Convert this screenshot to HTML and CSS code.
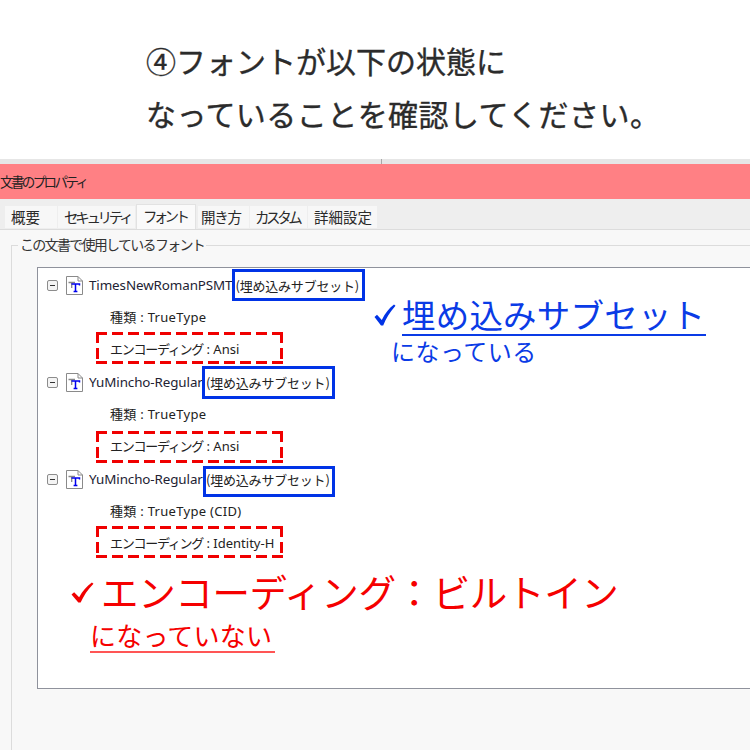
FILE: index.html
```html
<!DOCTYPE html>
<html lang="ja">
<head>
<meta charset="utf-8">
<title>文書のプロパティ</title>
<link rel="stylesheet" href="styles.css">
</head>
<body>
<svg class="defs" width="0" height="0" aria-hidden="true">
  <symbol id="ttf" viewBox="0 0 19 19">
    <path d="M1.5 .5H13L17.5 5V18.5H1.5Z" fill="#fff" stroke="#8a8a8a"/>
    <path d="M13 .5V5H17.5" fill="none" stroke="#8a8a8a"/>
    <path d="M3.5 6.5H10M6.7 6.5V12" fill="none" stroke="#888" stroke-width="1.3"/>
    <path d="M6.5 8H14.5V9.6M10.5 8V15.5M8.6 15.5H12.4" fill="none" stroke="#0000ee" stroke-width="1.5"/>
  </symbol>
  <symbol id="check" viewBox="0 0 22 22" preserveAspectRatio="none">
    <path d="M.5 13L3 10.8L7.8 16C11 9.5 15 4.2 20 .5L21.5 1.8C16 8 12 14.5 9.2 21.5H7Z" fill="currentColor"/>
  </symbol>
</svg>
<header class="heading">
  <p class="line-1">④フォントが以下の状態に</p>
  <p>なっていることを確認してください。</p>
</header>
<div class="strip"></div>
<main class="dialog">
  <div class="titlebar">文書のプロパティ</div>
  <nav class="tabs">
    <span class="tab tab-summary">概要</span>
    <span class="tab tab-security">セキュリティ</span>
    <span class="tab active">フォント</span>
    <span class="tab tab-open">開き方</span>
    <span class="tab tab-custom">カスタム</span>
    <span class="tab tab-detail">詳細設定</span>
  </nav>
  <section class="panel">
    <div class="group">
      <h2 class="legend">この文書で使用しているフォント</h2>
      <div class="tree">
        <div class="font-item">
          <div class="font-row">
            <span class="minus"></span>
            <svg class="ttf"><use href="#ttf"/></svg>
            <span class="font-name">TimesNewRomanPSMT</span>
            <span class="embed embed-1">(埋め込みサブセット)</span>
          </div>
          <div class="prop">種類 : TrueType</div>
          <div class="prop enc enc-1"><span class="enc-label">エンコーディング</span> : Ansi</div>
        </div>
        <div class="font-item">
          <div class="font-row">
            <span class="minus"></span>
            <svg class="ttf"><use href="#ttf"/></svg>
            <span class="font-name short">YuMincho-Regular</span>
            <span class="embed embed-2">(埋め込みサブセット)</span>
          </div>
          <div class="prop">種類 : TrueType</div>
          <div class="prop enc enc-2"><span class="enc-label">エンコーディング</span> : Ansi</div>
        </div>
        <div class="font-item">
          <div class="font-row">
            <span class="minus"></span>
            <svg class="ttf"><use href="#ttf"/></svg>
            <span class="font-name short">YuMincho-Regular</span>
            <span class="embed embed-3">(埋め込みサブセット)</span>
          </div>
          <div class="prop">種類 : TrueType (CID)</div>
          <div class="prop enc enc-1"><span class="enc-label">エンコーディング</span> : Identity-H</div>
        </div>
      </div>
    </div>
  </section>
</main>
<aside class="note note-blue">
  <div class="note-main"><svg class="check"><use href="#check"/></svg><span class="note-big">埋め込みサブセット</span></div>
  <div class="note-sub">になっている</div>
</aside>
<aside class="note note-red">
  <div class="note-main"><svg class="check"><use href="#check"/></svg><span class="note-big">エンコーディング：ビルトイン</span></div>
  <div class="note-sub"><span>になっていない</span></div>
</aside>
</body>
</html>
```
FILE: styles.css
```css
*, *::before, *::after { box-sizing: border-box; }
html, body { margin: 0; padding: 0; }
body {
  position: relative;
  width: 750px;
  height: 750px;
  overflow: hidden;
  background: #fff;
  font-family: "Noto Sans CJK JP", "Noto Sans", sans-serif;
  color: #222;
}
.defs { position: absolute; }
.heading {
  height: 159px;
  padding: 34px 0 0 146px;
  font-size: 30px;
  font-weight: 400;
  color: #2b2b2b;
  -webkit-text-stroke: .35px #2b2b2b;
}
.heading p { margin: 0; height: 53px; line-height: 53px; letter-spacing: .45px; white-space: nowrap; }
.heading .line-1 { letter-spacing: 0; }
.strip {
  height: 5px;
  background: #e6e6e6;
  background-image: linear-gradient(#a8a8a8, #a8a8a8);
  background-size: 1px 100%;
  background-position: 381px 0;
  background-repeat: no-repeat;
}
.dialog { height: 586px; background: #f8f8f8; font-family: "Noto Sans CJK JP", sans-serif; }
.titlebar {
  height: 35px;
  background: #ff8084;
  font-size: 13.5px;
  line-height: 34px;
  letter-spacing: -2.6px;
  color: #222;
}
.tabs {
  height: 31px;
  background: #eeeeee;
  display: flex;
  align-items: flex-end;
  padding: 0 0 1px 5px;
  border-bottom: 1px solid #dcdcdc;
  font-size: 14.5px;
}
.tab {
  height: 22px;
  line-height: 21px;
  background: #f7f7f7;
  white-space: nowrap;
  overflow: hidden;
  margin-right: 1px;
  color: #2a2a2a;
}
.tab-summary { width: 52px; padding-left: 6px; }
.tab-security { width: 77px; padding-left: 6px; letter-spacing: -3.3px; }
.tab.active { width: 60px; height: 25px; line-height: 22px; background: #fafafa; letter-spacing: -3.7px; padding-left: 6px; margin-bottom: -1px; border: 1px solid #e2e2e2; border-bottom: 0; }
.tab-open { width: 51px; margin-left: 1px; padding-left: 3px; letter-spacing: -1.2px; }
.tab-custom { width: 57px; padding-left: 5px; letter-spacing: -3.4px; }
.tab-detail { width: 69px; padding-left: 6px; }
.panel { height: 520px; padding: 15px 0 0 11px; }
.group {
  position: relative;
  height: 505px;
  border-left: 1px solid #dcdcdc;
  border-top: 1px solid #dcdcdc;
  padding: 21px 0 0 25px;
}
.legend {
  position: absolute;
  left: 6px;
  top: -11px;
  margin: 0;
  padding: 0 2px;
  background: #f8f8f8;
  font-size: 14px;
  font-weight: 400;
  line-height: 19px;
  letter-spacing: -1.7px;
  color: #333;
}
.tree {
  height: 422px;
  background: #fff;
  border: 1px solid #8f929c;
  border-right: 0;
  padding: 1px 0 0 9px;
  font-size: 13px;
}
.font-item { height: 97px; }
.font-row { display: flex; align-items: center; height: 32px; position: relative; }
.minus {
  position: relative;
  width: 11px;
  height: 11px;
  border: 1px solid #8c8c8c;
  border-radius: 2px;
  background: #f4f4f4;
  margin-right: 7px;
}
.minus::after {
  content: "";
  position: absolute;
  left: 2px;
  top: 4px;
  width: 5px;
  height: 1px;
  background: #333;
}
.ttf { width: 19px; height: 19px; margin-right: 5px; }
.font-name { font-family: "Noto Sans", sans-serif; font-size: 13.4px; letter-spacing: -.1px; white-space: nowrap; color: #223; }
.font-name.short { width: 114px; overflow: hidden; }
.embed {
  position: relative;
  margin-left: 3px;
  white-space: nowrap;
  font-size: 13px;
  letter-spacing: -.2px;
  color: #222;
}
.embed::after {
  content: "";
  position: absolute;
  top: -7px;
  bottom: -6px;
  border: 3px solid #0033e6;
}
.embed-1::after { left: -3px; right: -6px; }
.embed-2::after { left: -4px; right: -5px; bottom: -7px; }
.embed-3::after { left: -3px; right: -5px; top: -4px; bottom: -8px; }
.prop {
  height: 32px;
  line-height: 32px;
  padding-left: 63px;
  font-size: 13px;
  letter-spacing: .3px;
  white-space: nowrap;
  color: #222;
  font-family: "Noto Sans", "Noto Sans CJK JP", sans-serif;
}
.enc { position: relative; letter-spacing: 0; }
.enc-label { letter-spacing: -1.25px; }
.enc::after {
  content: "";
  position: absolute;
  left: 49px;
  width: 187px;
  height: 32px;
  --dash: #f00000 0 11px, transparent 11px 16px;
  background:
    repeating-linear-gradient(90deg, var(--dash)) 0 0 / 100% 3px no-repeat,
    repeating-linear-gradient(90deg, var(--dash)) 0 100% / 100% 3px no-repeat,
    repeating-linear-gradient(180deg, var(--dash)) 0 0 / 3px 100% no-repeat,
    repeating-linear-gradient(180deg, var(--dash)) 100% 0 / 3px 100% no-repeat;
}
.enc-1::after { top: -1px; }
.enc-2::after { top: 1px; }
.note { position: absolute; white-space: nowrap; }
.note-main { display: flex; align-items: center; }
.note-blue { left: 373px; top: 294px; color: #0a3be6; }
.note-blue .check { width: 22px; height: 22px; margin: 0 6px 0 1px; color: #0033e6; }
.note-blue .note-big { font-size: 33.5px; line-height: 40px; letter-spacing: .2px; border-bottom: 2px solid #0a3be6; width: 304px; }
.note-blue .note-sub { height: 30px; font-size: 24px; line-height: 30px; padding-left: 18px; letter-spacing: .5px; }
.note-red { left: 70px; top: 568px; color: #f50000; }
.note-red .check { width: 23px; height: 21px; margin: 3px 7px 0 1px; color: #f00000; }
.note-red .note-big { font-size: 37.5px; line-height: 46px; letter-spacing: -.35px; }
.note-red .note-sub { padding: 2px 0 0 20px; font-size: 26px; letter-spacing: .2px; }
.note-red .note-sub span { display: inline-block; line-height: 33px; padding-right: 3px; border-bottom: 2px solid #f55; }
```
